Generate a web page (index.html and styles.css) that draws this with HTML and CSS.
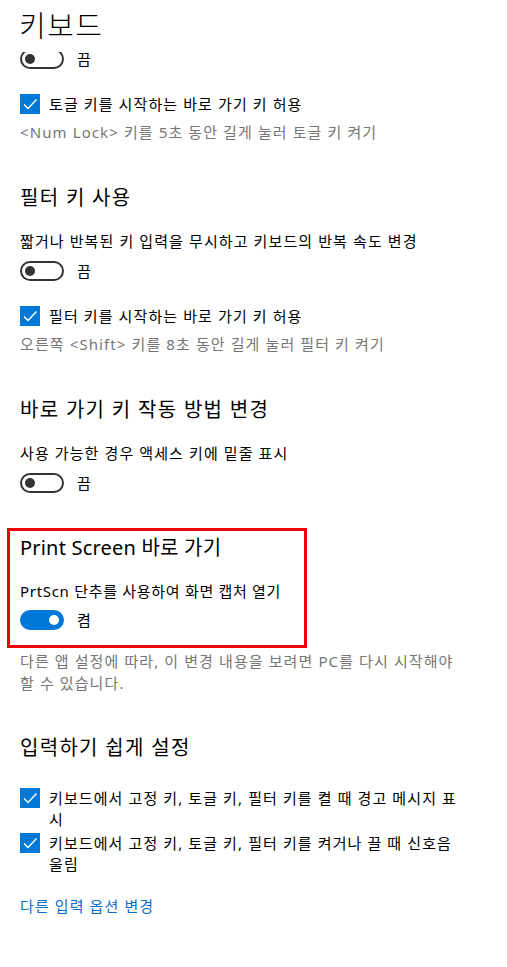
FILE: index.html
```html
<!DOCTYPE html>
<html lang="ko">

<head>
  <meta charset="UTF-8">
  <title>키보드</title>
  <link rel="stylesheet" href="styles.css">
</head>

<body>
  <header class="page-header">
    <h1 class="page-title">키보드</h1>
  </header>

  <main class="content">
    <!-- 토글 키 (위쪽이 제목 아래로 스크롤됨) -->
    <div class="toggle-row first">
      <span class="toggle-clip"><span class="toggle"></span></span>
      <span class="toggle-state">끔</span>
    </div>
    <label class="check-row">
      <span class="checkbox"><svg viewBox="0 0 20 20" width="20" height="20"><path d="M4 10.5l4 4 8.5-9" fill="none" stroke="#fff" stroke-width="1.4"/></svg></span>
      <span class="check-text">토글 키를 시작하는 바로 가기 키 허용</span>
    </label>
    <p class="hint">&lt;Num Lock&gt; 키를 5초 동안 길게 눌러 토글 키 켜기</p>

    <!-- 필터 키 -->
    <section class="group">
      <h2 class="group-title">필터 키 사용</h2>
      <p class="desc">짧거나 반복된 키 입력을 무시하고 키보드의 반복 속도 변경</p>
      <div class="toggle-row">
        <span class="toggle"></span>
        <span class="toggle-state">끔</span>
      </div>
      <label class="check-row">
        <span class="checkbox"><svg viewBox="0 0 20 20" width="20" height="20"><path d="M4 10.5l4 4 8.5-9" fill="none" stroke="#fff" stroke-width="1.4"/></svg></span>
        <span class="check-text">필터 키를 시작하는 바로 가기 키 허용</span>
      </label>
      <p class="hint">오른쪽 &lt;Shift&gt; 키를 8초 동안 길게 눌러 필터 키 켜기</p>
    </section>

    <!-- 바로 가기 키 -->
    <section class="group">
      <h2 class="group-title">바로 가기 키 작동 방법 변경</h2>
      <p class="desc">사용 가능한 경우 액세스 키에 밑줄 표시</p>
      <div class="toggle-row">
        <span class="toggle"></span>
        <span class="toggle-state">끔</span>
      </div>
    </section>

    <!-- Print Screen -->
    <section class="group highlight">
      <h2 class="group-title">Print Screen 바로 가기</h2>
      <p class="desc">PrtScn 단추를 사용하여 화면 캡처 열기</p>
      <div class="toggle-row">
        <span class="toggle on"></span>
        <span class="toggle-state">켬</span>
      </div>
    </section>
    <p class="note">다른 앱 설정에 따라, 이 변경 내용을 보려면 PC를 다시 시작해야 할 수 있습니다.</p>

    <!-- 입력하기 쉽게 -->
    <section class="group last">
      <h2 class="group-title">입력하기 쉽게 설정</h2>
      <label class="check-row multi">
        <span class="checkbox"><svg viewBox="0 0 20 20" width="20" height="20"><path d="M4 10.5l4 4 8.5-9" fill="none" stroke="#fff" stroke-width="1.4"/></svg></span>
        <span class="check-text">키보드에서 고정 키, 토글 키, 필터 키를 켤 때 경고 메시지 표시</span>
      </label>
      <label class="check-row multi">
        <span class="checkbox"><svg viewBox="0 0 20 20" width="20" height="20"><path d="M4 10.5l4 4 8.5-9" fill="none" stroke="#fff" stroke-width="1.4"/></svg></span>
        <span class="check-text">키보드에서 고정 키, 토글 키, 필터 키를 켜거나 끌 때 신호음 울림</span>
      </label>
      <a class="more-link" href="#">다른 입력 옵션 변경</a>
    </section>
  </main>
</body>

</html>
```

FILE: styles.css
```css
body {
  margin: 0;
  padding: 0;
  background: #fff;
  color: #000;
  font-family: 'Noto Sans', 'Noto Sans CJK KR', sans-serif;
  font-size: 15px;
  letter-spacing: 1.1px;
}

.page-header {
  height: 52px;
  padding-left: 19px;
  background: #fff;
}

.page-title {
  margin: 0;
  font-size: 29px;
  font-weight: 300;
  line-height: 52px;
  letter-spacing: 1.5px;
}

.content {
  width: 445px;
  padding-left: 20px;
}

.toggle-row {
  display: flex;
  align-items: center;
  gap: 13px;
  height: 20px;
  margin-top: 10px;
}

.toggle-row.first {
  margin-top: -3px;
}

/* 첫 토글은 위쪽 3px이 제목 뒤로 가려짐 */
.toggle-clip {
  align-self: flex-end;
  height: 17px;
  overflow: hidden;
}

.toggle-clip .toggle {
  margin-top: -3px;
}

.toggle {
  box-sizing: border-box;
  width: 44px;
  height: 20px;
  border: 2px solid #333;
  border-radius: 10px;
  display: flex;
  align-items: center;
  padding-left: 3px;
}

.toggle::before {
  content: '';
  width: 10px;
  height: 10px;
  border-radius: 50%;
  background: #333;
}

.toggle.on {
  background: #0078d7;
  border-color: #0078d7;
  justify-content: flex-end;
  padding-left: 0;
  padding-right: 3px;
}

.toggle.on::before {
  background: #fff;
}

.toggle-state {
  line-height: 20px;
}

.check-row {
  display: flex;
  align-items: flex-start;
  gap: 9px;
  margin-top: 25px;
  line-height: 20px;
}

.checkbox {
  flex: none;
  width: 20px;
  height: 20px;
  background: #0078d7;
}

.checkbox svg {
  display: block;
}

.hint {
  margin: 8px 0 0;
  color: #767676;
  line-height: 20px;
}

.group {
  margin-top: 42px;
}

.group-title {
  margin: 0;
  font-size: 20px;
  font-weight: 400;
  line-height: 28px;
  letter-spacing: 1.3px;
}

.desc {
  margin: 19px 0 0;
  line-height: 20px;
}

/* 빨간 강조 상자 */
.highlight {
  box-sizing: border-box;
  width: 300px;
  margin: 35px 0 0 -13px;
  padding: 3px 10px 15px 10px;
  border: 3px solid #e8000b;
  letter-spacing: 0.7px;
}

.highlight .group-title {
  letter-spacing: 0.2px;
}

.highlight .toggle-row {
  margin-top: 9px;
}

.note {
  margin: 2px 0 0;
  color: #767676;
  line-height: 22px;
}

.last {
  margin-top: 40px;
}

.check-row.multi {
  line-height: 21px;
  margin-top: 3px;
}

.last .group-title + .check-row.multi {
  margin-top: 26px;
}

.more-link {
  display: block;
  margin-top: 21px;
  line-height: 20px;
  color: #0a6ccb;
  text-decoration: none;
}
```
